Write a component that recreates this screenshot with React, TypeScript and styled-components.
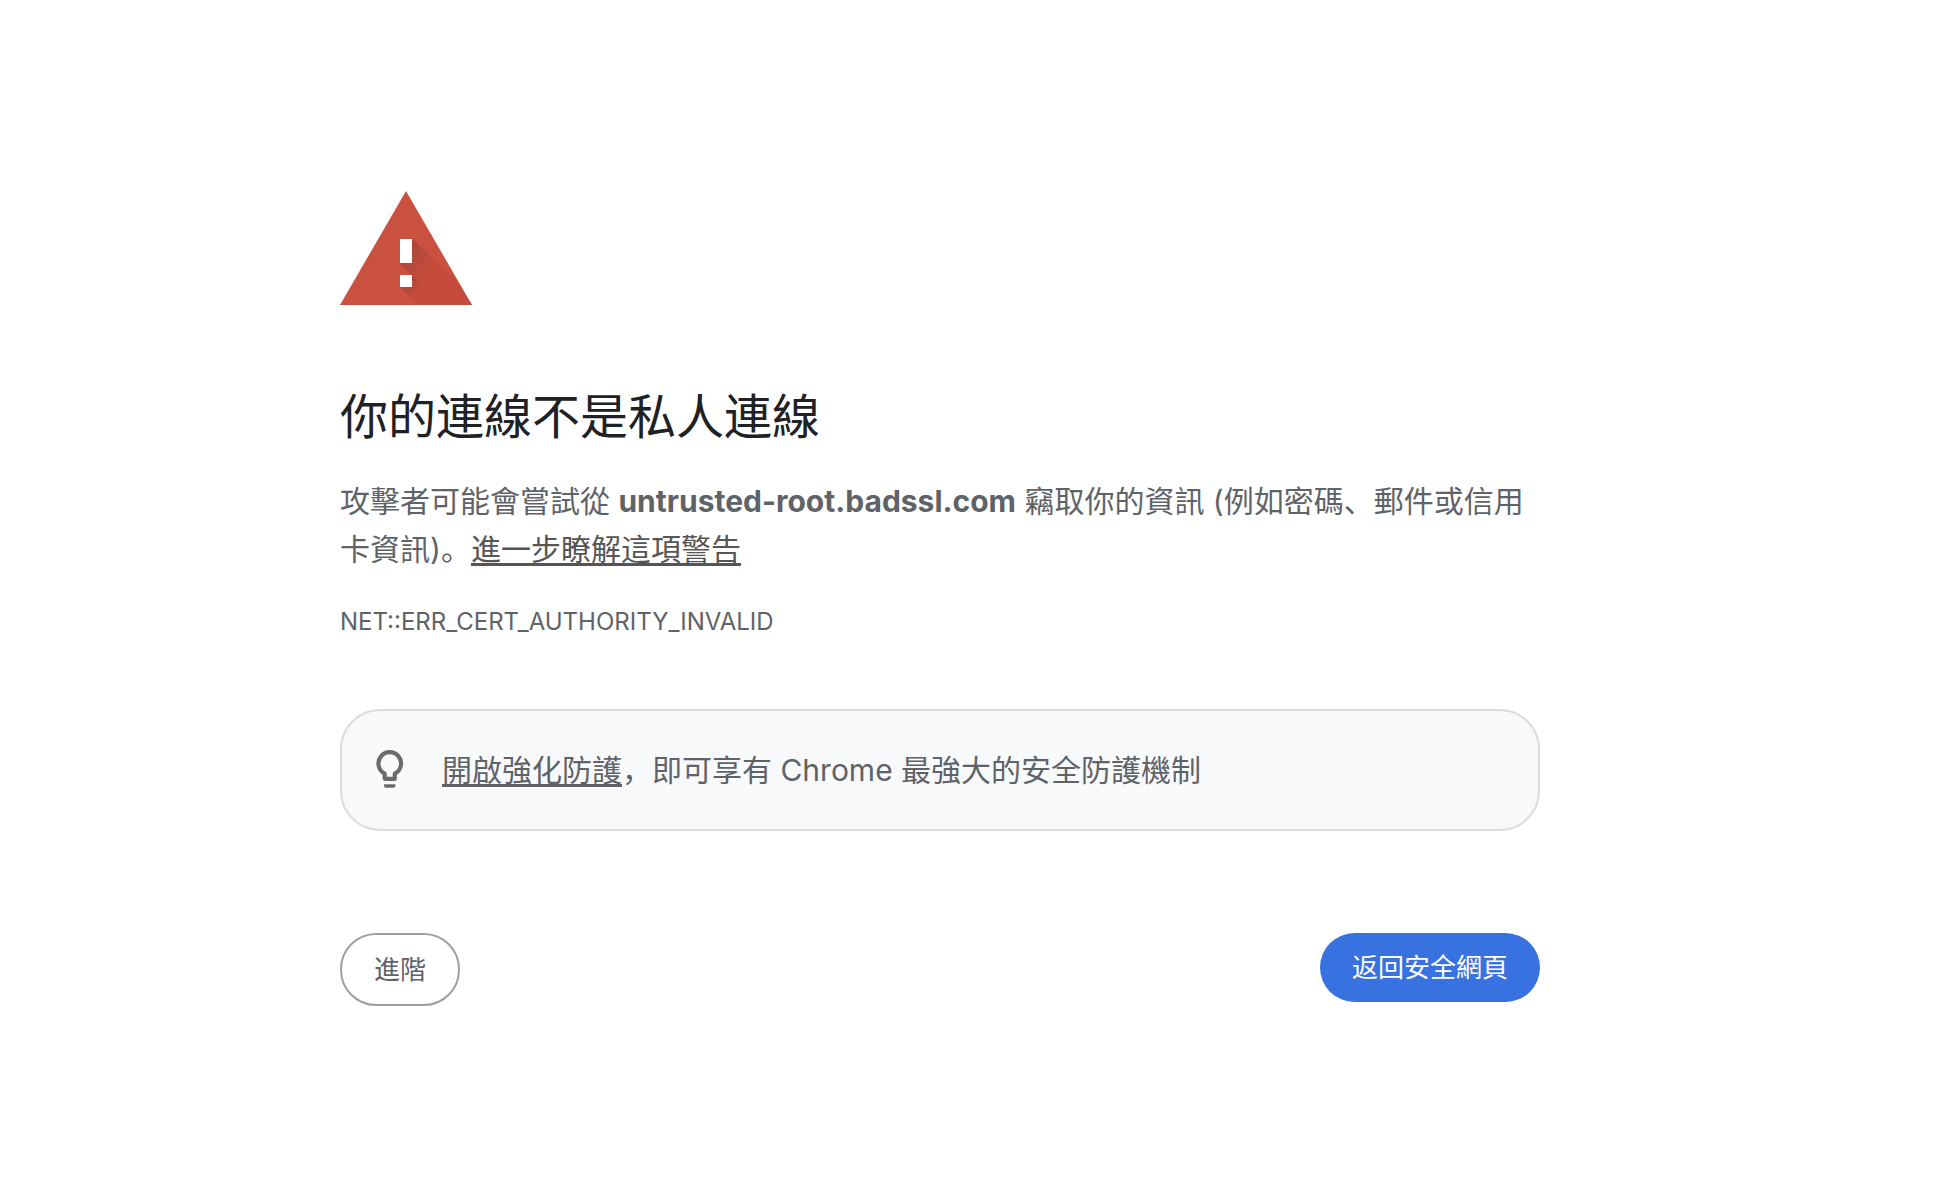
import React from "react";
import styled, { createGlobalStyle } from "styled-components";

const GlobalStyle = createGlobalStyle`
  body {
    margin: 0;
    background: #ffffff;
    color: #5f6368;
    font-family: Inter, "Noto Sans CJK SC", sans-serif;
    font-size: 30px;
    line-height: 48px;
  }
`;

const Page = styled.div`
  box-sizing: border-box;
  padding: 191px 80px 48px 26px;
`;

const Interstitial = styled.main`
  max-width: 1200px;
  margin: 0 auto;
`;

const WarningIcon = styled.svg`
  display: block;
  width: 132px;
  height: 114px;
`;

const Title = styled.h1`
  margin: 82px 0 30px;
  color: #202124;
  font-size: 48px;
  font-weight: 400;
  line-height: 60px;
`;

const Paragraph = styled.p`
  margin: 0;
`;

const Link = styled.a<{ $color?: string }>`
  color: ${(p) => p.$color ?? "#5f6368"};
  text-decoration: underline;
  text-decoration-thickness: 3px;
  text-underline-offset: 3px;
  text-decoration-skip-ink: none;
`;

const ErrorCode = styled.div`
  margin-top: 25px;
  font-size: 24px;
`;

const Promo = styled.section`
  display: flex;
  align-items: center;
  gap: 36px;
  margin-top: 63px;
  padding: 35px 32px;
  border: 2px solid #dadce0;
  border-radius: 40px;
  background: #f8f9fb;
`;

const BulbIcon = styled.svg`
  flex: none;
  width: 32px;
  height: 40px;
`;

const Actions = styled.div`
  display: flex;
  flex-wrap: wrap;
  align-items: flex-start;
  justify-content: space-between;
  gap: 24px;
  margin-top: 102px;
`;

const Button = styled.button<{ $primary?: boolean }>`
  padding: 16px 32px;
  border: ${(p) => (p.$primary ? "0" : "2px solid #9aa0a6")};
  border-radius: 36px;
  background: ${(p) => (p.$primary ? "#3871e0" : "#ffffff")};
  color: ${(p) => (p.$primary ? "#ffffff" : "#5f6368")};
  font: inherit;
  font-size: 26px;
  line-height: 37px;
  cursor: pointer;
`;

function Warning() {
  return (
    <WarningIcon viewBox="0 0 132 114" aria-hidden="true">
      <defs>
        <linearGradient id="upper" gradientUnits="userSpaceOnUse" x1="66" y1="60" x2="85" y2="79">
          <stop offset="0" stopColor="#a9463a" />
          <stop offset="1" stopColor="#c54b3c" />
        </linearGradient>
        <linearGradient id="lower" gradientUnits="userSpaceOnUse" x1="66" y1="90" x2="78" y2="102">
          <stop offset="0" stopColor="#a9463a" />
          <stop offset="1" stopColor="#c54b3c" />
        </linearGradient>
      </defs>
      <path d="M66 0 132 114H0Z" fill="#ca513f" />
      <path d="M72 48 117 90 132 114H96L60 72Z" fill="url(#upper)" />
      <path d="M72 84 102 114H78L60 96Z" fill="url(#lower)" />
      <path d="M60 48h12v24H60zM60 84h12v12H60z" fill="#ffffff" />
    </WarningIcon>
  );
}

function Bulb() {
  return (
    <BulbIcon viewBox="0 0 32 40" aria-hidden="true">
      <path
        d="M10.700 28.800V23.600A11.300 11.300 0 1 1 20.800 23.600V28.800Z"
        fill="none"
        stroke="#6b6b6b"
        strokeWidth="4.2"
        strokeLinejoin="round"
      />
      <path d="M10 34.200h11.400v1.600a2 2 0 0 1-2 2h-7.400a2 2 0 0 1-2-2z" fill="#6b6b6b" />
    </BulbIcon>
  );
}

export default function App() {
  return (
    <>
      <GlobalStyle />
      <Page lang="zh-Hans">
        <Interstitial>
          <Warning />
          <Title>你的連線不是私人連線</Title>
          <Paragraph>
            攻擊者可能會嘗試從 <strong>untrusted-root.badssl.com</strong> 竊取你的資訊
            (例如密碼、郵件或信用卡資訊)。
            <Link href="#learn-more" $color="#555555">進一步瞭解這項警告</Link>
          </Paragraph>
          <ErrorCode>NET::ERR_CERT_AUTHORITY_INVALID</ErrorCode>
          <Promo>
            <Bulb />
            <Paragraph>
              <Link href="#enhanced-protection">開啟強化防護</Link>，即可享有 Chrome 最強大的安全防護機制
            </Paragraph>
          </Promo>
          <Actions>
            <Button type="button">進階</Button>
            <Button type="button" $primary>返回安全網頁</Button>
          </Actions>
        </Interstitial>
      </Page>
    </>
  );
}
